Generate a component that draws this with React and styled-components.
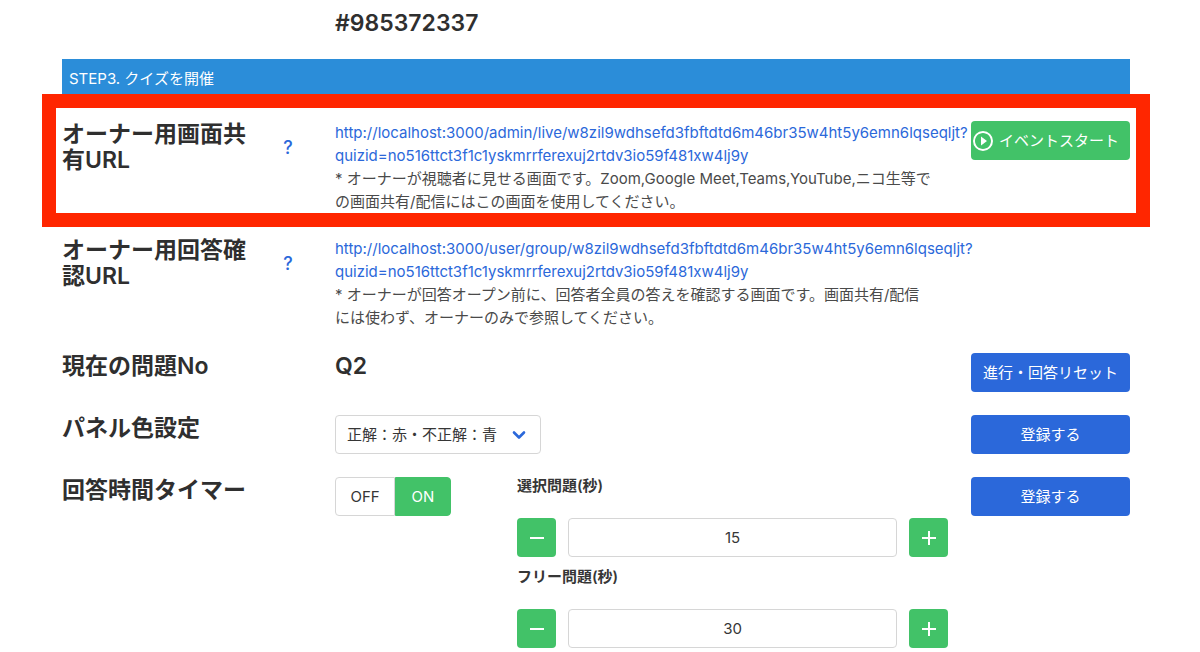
import React, { useState } from "react";
import styled, { createGlobalStyle } from "styled-components";


export default function App() {
    const [timer, setTimer] = useState("on");
    const [choice, setChoice] = useState(15);
    const [free, setFree] = useState(30);

    return (
        <Page>
            <GlobalStyle />
            <Row>
                <Value>#985372337</Value>
            </Row>
            <StepBar>STEP3. クイズを開催</StepBar>
            <Settings>
                <Row $marked>
                    <RowLabel help>オーナー用画面共有URL</RowLabel>
                    <UrlText>
                        <a href="#live">
                            http://localhost:3000/admin/live/w8zil9wdhsefd3fbftdtd6m46br35w4ht5y6emn6lqseqljt?<br />
                            quizid=no516ttct3f1c1yskmrrferexuj2rtdv3io59f481xw4lj9y
                        </a>
                        <p>
                            * オーナーが視聴者に見せる画面です。Zoom,Google Meet,Teams,YouTube,ニコ生等で<br />
                            の画面共有/配信にはこの画面を使用してください。
                        </p>
                    </UrlText>
                    <Button $color="#42c268" $icon>
                        <PlayIcon />
                        イベントスタート
                    </Button>
                </Row>
                <Row>
                    <RowLabel help>オーナー用回答確認URL</RowLabel>
                    <UrlText>
                        <a href="#group">
                            http://localhost:3000/user/group/w8zil9wdhsefd3fbftdtd6m46br35w4ht5y6emn6lqseqljt?<br />
                            quizid=no516ttct3f1c1yskmrrferexuj2rtdv3io59f481xw4lj9y
                        </a>
                        <p>
                            * オーナーが回答オープン前に、回答者全員の答えを確認する画面です。画面共有/配信<br />
                            には使わず、オーナーのみで参照してください。
                        </p>
                    </UrlText>
                </Row>
                <Row>
                    <RowLabel>現在の問題No</RowLabel>
                    <Value>Q2</Value>
                    <Button>進行・回答リセット</Button>
                </Row>
                <Row>
                    <RowLabel htmlFor="panel">パネル色設定</RowLabel>
                    <SelectBox>
                        <select id="panel">
                            <option>正解：赤・不正解：青</option>
                            <option>正解：青・不正解：赤</option>
                        </select>
                        <svg width="14" height="10" viewBox="0 0 14 10" aria-hidden="true">
                            <path d="M2 2.5L7 7.5L12 2.5" fill="none" stroke="#2b68da" strokeWidth="2.6" strokeLinecap="round" strokeLinejoin="round" />
                        </svg>
                    </SelectBox>
                    <Button>登録する</Button>
                </Row>
                <Row>
                    <RowLabel>回答時間タイマー</RowLabel>
                    <TimerCell>
                        <Toggle role="radiogroup" aria-label="回答時間タイマー">
                            <ToggleItem $on={timer === "off"}>
                                <input type="radio" name="timer" checked={timer === "off"} onChange={() => setTimer("off")} />
                                OFF
                            </ToggleItem>
                            <ToggleItem $on={timer === "on"}>
                                <input type="radio" name="timer" checked={timer === "on"} onChange={() => setTimer("on")} />
                                ON
                            </ToggleItem>
                        </Toggle>
                        <Fields>
                            <NumberField id="choice" label="選択問題(秒)" value={choice} onChange={setChoice} />
                            <NumberField id="free" label="フリー問題(秒)" value={free} onChange={setFree} />
                        </Fields>
                    </TimerCell>
                    <Button>登録する</Button>
                </Row>
            </Settings>
        </Page>
    )
}

function RowLabel({ children, help, htmlFor }) {
    return (
        <LabelCell>
            <Title>{htmlFor ? <label htmlFor={htmlFor}>{children}</label> : children}</Title>
            {help && <Help type="button" aria-label="ヘルプ">?</Help>}
        </LabelCell>
    )
}

function NumberField({ id, label, value, onChange }) {
    return (
        <Field>
            <label htmlFor={id}>{label}</label>
            <Stepper>
                <StepButton type="button" aria-label="減らす" onClick={() => onChange(value - 1)}>
                    <Icon d="M19,13H5V11H19V13Z" />
                </StepButton>
                <input id={id} value={value} inputMode="numeric" onChange={(e) => onChange(Number(e.target.value) || 0)} />
                <StepButton type="button" aria-label="増やす" onClick={() => onChange(value + 1)}>
                    <Icon d="M19,13H13V19H11V13H5V11H11V5H13V11H19V13Z" />
                </StepButton>
            </Stepper>
        </Field>
    )
}

function Icon({ d }) {
    return (
        <svg width="24" height="24" viewBox="0 0 24 24" fill="currentColor" aria-hidden="true">
            <path d={d} />
        </svg>
    )
}

function PlayIcon() {
    return <Icon d="M12,20C7.59,20 4,16.41 4,12C4,7.59 7.59,4 12,4C16.41,4 20,7.59 20,12C20,16.41 16.41,20 12,20M12,2A10,10 0 0,0 2,12A10,10 0 0,0 12,22A10,10 0 0,0 22,12A10,10 0 0,0 12,2M10,16.5L16,12L10,7.5V16.5Z" />
}

const GlobalStyle = createGlobalStyle`
    * {
        box-sizing: border-box;
    }

    body {
        margin: 0;
        background-color: #FFFFFF;
        color: #4a4a4a;
        font-family: Inter, 'Noto Sans CJK JP', sans-serif;
        font-size: 15px;
        line-height: 23px;
    }

    p {
        margin: 0;
    }

    button, input, select {
        font: inherit;
    }
`

const Page = styled.main`
    padding: 10px 70px 0 62px;
`

const Settings = styled.section`
    display: flex;
    flex-direction: column;
    gap: 23px;
    padding-top: 26px;
`

const Row = styled.div`
    position: relative;
    display: grid;
    grid-template-columns: 250px minmax(0, 1fr) 159px;
    column-gap: 23px;
    align-items: start;

    & > :first-child:last-child {
        grid-column: 2;
    }

    /* highlight frame drawn over the row */
    &::after {
        content: "";
        display: ${(props) => (props.$marked ? "block" : "none")};
        position: absolute;
        inset: -27px -20px -13px -20px;
        border: 14px solid #ff2600;
        pointer-events: none;
    }
`

const StepBar = styled.div`
    margin-top: 23px;
    padding: 8px 7px 5px;
    background-color: #2b8dd9;
    color: #FFFFFF;
`

const LabelCell = styled.div`
    display: flex;
    justify-content: space-between;
`

const Title = styled.h2`
    flex: 0 1 190px;
    margin: 0;
    color: #2f2f2f;
    font-size: 23px;
    font-weight: 600;
    line-height: 26px;
`

const Value = styled.p`
    color: #2f2f2f;
    font-size: 23px;
    font-weight: 600;
    line-height: 26px;
`

const Help = styled.button`
    width: 48px;
    height: 52px;
    padding: 0;
    border: none;
    background: none;
    color: #2b68da;
    font-size: 18px;
    font-weight: 500;
    cursor: pointer;
`

const UrlText = styled.div`
    padding-bottom: 1px;
    white-space: nowrap;

    a {
        color: #2b68da;
        text-decoration: none;
    }
`

const Button = styled.button`
    display: flex;
    align-items: center;
    justify-content: ${(props) => (props.$icon ? "flex-start" : "center")};
    gap: 4px;
    height: 39px;
    padding: 0;
    border: none;
    border-radius: 4px;
    background-color: ${(props) => props.$color || "#2b68da"};
    color: #FFFFFF;
    white-space: nowrap;
    cursor: pointer;
`

const SelectBox = styled.div`
    position: relative;
    width: 206px;

    select {
        width: 100%;
        height: 39px;
        padding: 0 36px 0 11px;
        appearance: none;
        border: 1px solid #d6d6d6;
        border-radius: 4px;
        background-color: #FFFFFF;
        color: #363636;
    }

    svg {
        position: absolute;
        top: 15px;
        right: 15px;
        pointer-events: none;
    }
`

const TimerCell = styled.div`
    display: flex;
    align-items: flex-start;
    justify-content: space-between;
    gap: 66px;
`

const Toggle = styled.div`
    display: flex;
`

const ToggleItem = styled.label`
    display: flex;
    align-items: center;
    justify-content: center;
    width: 60px;
    height: 39px;
    border: 1px solid ${(props) => (props.$on ? "#42c268" : "#d6d6d6")};
    border-radius: 4px 0 0 4px;
    background-color: ${(props) => (props.$on ? "#42c268" : "#FFFFFF")};
    color: ${(props) => (props.$on ? "#FFFFFF" : "#363636")};
    cursor: pointer;

    &:last-child {
        width: 56px;
        border-radius: 0 4px 4px 0;
    }

    input {
        position: absolute;
        opacity: 0;
        pointer-events: none;
    }
`

const Fields = styled.div`
    display: flex;
    flex: 1;
    flex-direction: column;
    gap: 11px;
`

const Field = styled.div`
    display: flex;
    flex-direction: column;
    gap: 23px;

    label {
        color: #363636;
        font-weight: 600;
        line-height: 18px;
    }
`

const Stepper = styled.div`
    display: flex;
    gap: 12px;

    input {
        flex: 1;
        min-width: 0;
        height: 39px;
        border: 1px solid #d6d6d6;
        border-radius: 4px;
        color: #363636;
        text-align: center;
    }
`

const StepButton = styled.button`
    display: flex;
    align-items: center;
    justify-content: center;
    width: 39px;
    height: 39px;
    padding: 0;
    border: none;
    border-radius: 4px;
    background-color: #42c268;
    color: #FFFFFF;
    cursor: pointer;
`
